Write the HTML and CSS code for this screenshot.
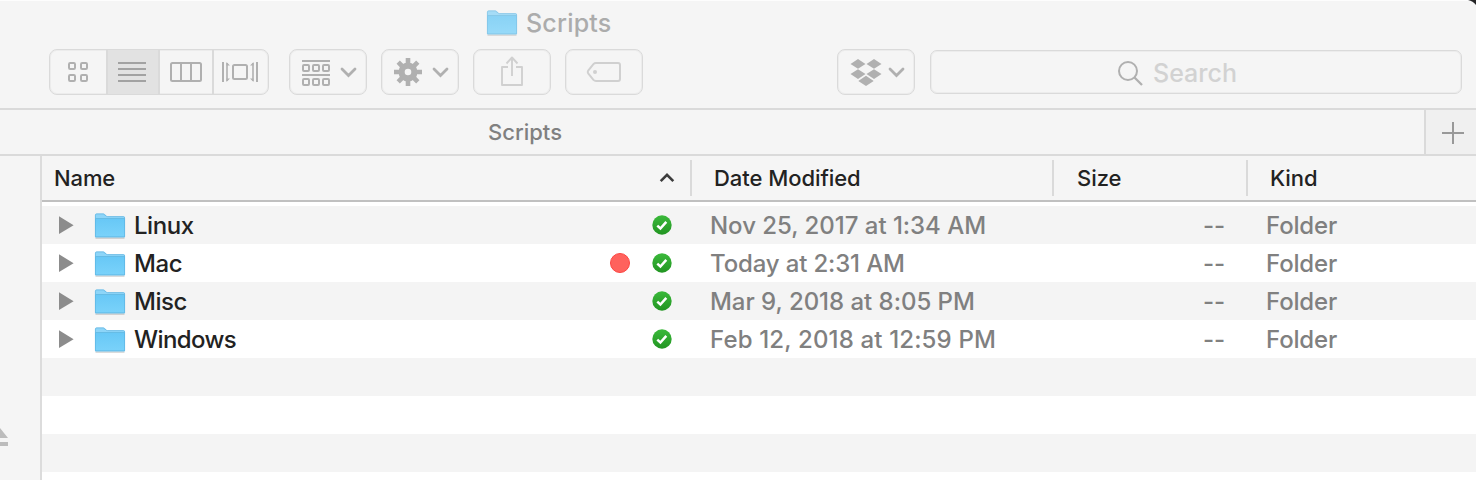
FILE: index.html
```html
<!DOCTYPE html>
<html lang="en">
<head>
<meta charset="utf-8">
<title>Scripts</title>
<link rel="stylesheet" href="styles.css">
</head>
<body>
<svg class="defs" width="0" height="0" aria-hidden="true">
  <defs>
    <linearGradient id="folder-fill" x1="0" y1="0" x2="0" y2="1"><stop offset="0" stop-color="#68c8f6"/><stop offset="1" stop-color="#7ad2fa"/></linearGradient>
    <linearGradient id="ok-fill" x1="0" y1="0" x2="0" y2="1"><stop offset="0" stop-color="#3bb93b"/><stop offset="1" stop-color="#229522"/></linearGradient>
    <symbol id="folder" viewBox="0 0 32 28">
      <path d="M1.5 26h29" stroke="#000" stroke-opacity=".18" stroke-width="1.6"/>
      <path d="M1 24.5V3.2Q1 1.5 2.7 1.5H9.3Q10.3 1.5 11 2.3L12.3 3.7Q12.8 4.2 13.6 4.2H29.4Q31 4.2 31 5.8V24.5Q31 25.2 30.3 25.2H1.7Q1 25.2 1 24.5Z" fill="#8dd5f8"/>
      <path d="M1 7H31V24.5Q31 25.2 30.3 25.2H1.7Q1 25.2 1 24.5Z" fill="url(#folder-fill)"/>
      <path d="M1.5 6.5H30.5" stroke="#5cb5e0" stroke-width=".8"/>
      <path d="M1.4 24.8V3.2Q1.4 1.9 2.7 1.9H9.3L12.3 4.1Q12.8 4.6 13.6 4.6H29.4Q30.6 4.6 30.6 5.8V24.8Z" fill="none" stroke="#58addb" stroke-opacity=".65" stroke-width=".9"/>
    </symbol>
    <symbol id="ok" viewBox="0 0 20 20">
      <circle cx="10" cy="10" r="9.7" fill="url(#ok-fill)"/>
      <path d="M5.3 10.6 8.4 13.5 14.3 6.8" fill="none" stroke="#fff" stroke-width="2.5"/>
    </symbol>
    <symbol id="arrow" viewBox="0 0 16 20"><path d="M1 1.3 15.6 10.2 1 19Z" fill="#8c8c8c"/></symbol>
  </defs>
</svg>
<div class="window">
  <header class="chrome">
    <div class="title"><svg class="folder faded"><use href="#folder"/></svg><span class="title-text">Scripts</span></div>
    <div class="toolbar">
      <div class="views">
        <span class="view"><svg viewBox="50 50 56 44" width="56" height="44" class="line"><g stroke-width="2"><rect x="69" y="63" width="6" height="6" rx="1.2"/><rect x="81" y="63" width="6" height="6" rx="1.2"/><rect x="69" y="75" width="6" height="6" rx="1.2"/><rect x="81" y="75" width="6" height="6" rx="1.2"/></g></svg></span>
        <span class="view selected"><svg viewBox="108 50 50 44" width="50" height="44"><path d="M118 63H146M118 69H146M118 75H146M118 81H146" stroke="#a2a2a2" stroke-width="2"/></svg></span>
        <span class="view"><svg viewBox="160 50 52 44" width="52" height="44" class="line"><rect x="171" y="63" width="30" height="18" rx="1.5" stroke-width="2"/><path d="M181 63V81M191 63V81" stroke-width="2"/></svg></span>
        <span class="view"><svg viewBox="214 50 54 44" width="54" height="44" class="line"><rect x="233" y="65" width="14" height="14" rx="1.5" stroke-width="2"/><path d="M223 62V82M257 62V82" stroke-width="2"/><path d="M227 63V81M253 63V81" stroke-width="1.6"/><path d="M226.5 62V65.5H230ZM226.5 82V78.5H230ZM253.5 62V65.5H250ZM253.5 82V78.5H250Z" fill="#b0b0b0" stroke="none"/></svg></span>
      </div>
      <span class="button"><svg viewBox="290 50 76 44" width="76" height="44" class="line"><path d="M302 61H330M302 75H330" stroke-width="2"/><g stroke-width="2"><rect x="303" y="65" width="6" height="6" rx="1"/><rect x="313" y="65" width="6" height="6" rx="1"/><rect x="323" y="65" width="6" height="6" rx="1"/><rect x="303" y="79" width="6" height="6" rx="1"/><rect x="313" y="79" width="6" height="6" rx="1"/><rect x="323" y="79" width="6" height="6" rx="1"/></g><path d="M342 69 348.5 75.5 355 69" stroke-width="2.8" stroke-linecap="round"/></svg></span>
      <span class="button"><svg viewBox="382 50 76 44" width="76" height="44" class="line"><circle cx="408" cy="72" r="6.4" stroke-width="6.2"/><g stroke-width="4.6"><path d="M408 58V64M408 80V86M394 72H400M416 72H422M398.2 62.2 402.5 66.5M413.5 77.5 417.8 81.8M417.8 62.2 413.5 66.5M402.5 77.5 398.2 81.8"/></g><path d="M434 69 440.5 75.5 447 69" stroke-width="2.8" stroke-linecap="round"/></svg></span>
      <span class="button"><svg viewBox="474 50 76 44" width="76" height="44" class="line pale"><path d="M508 67H502V85H522V67H516M512 76V58M506.5 63.5 512 57.5 517.5 63.5" stroke-width="1.9" stroke-linejoin="round"/></svg></span>
      <span class="button"><svg viewBox="566 50 76 44" width="76" height="44" class="line pale"><path d="M596 63H618Q620 63 620 65V79Q620 81 618 81H596Q594.5 81 593.4 79.9L588.2 73.5Q587.2 72 588.2 70.5L593.4 64.1Q594.5 63 596 63Z" stroke-width="2"/><circle cx="595" cy="72" r="2" fill="#d0d0d0" stroke="none"/></svg></span>
      <span class="button dropbox"><svg viewBox="838 50 76 44" width="76" height="44"><path d="M858 59 865.5 64 858 68.8 850.5 64ZM874 59 881.5 64 874 68.8 866.5 64ZM858 69.2 865.5 74 858 79 850.5 74ZM874 69.2 881.5 74 874 79 866.5 74ZM866 75.8 873.7 80.9 866 86 858.3 80.9Z" fill="#b0b0b0"/><path d="M890 69 896.5 75.5 903 69" fill="none" stroke="#b0b0b0" stroke-width="2.8" stroke-linecap="round"/></svg></span>
      <div class="search"><svg width="28" height="28" viewBox="1116 58 28 28" class="line"><circle cx="1128" cy="71" r="9" stroke-width="2"/><path d="M1134.5 77.5 1142 85" stroke-width="2.3"/></svg><span class="search-text">Search</span></div>
    </div>
  </header>
  <div class="tabs">
    <div class="tab"><span class="tab-text">Scripts</span></div>
    <div class="add"><svg width="24" height="24" viewBox="0 0 24 24"><path d="M1 12H23M12 1V23" stroke="#999" stroke-width="2"/></svg></div>
  </div>
  <div class="body">
    <aside class="sidebar"><svg class="eject" width="8" height="18" viewBox="0 0 8 18"><path d="M0 0 8 10H0ZM0 14H8V18H0Z" fill="#bcbcbc"/></svg></aside>
    <main class="list">
      <div class="columns">
        <div class="col col-name"><span class="name-text">Name</span><svg width="16" height="12" viewBox="0 0 16 12"><path d="M1.7 9.2 8 2.8 14.3 9.2" fill="none" stroke="#3c3c3c" stroke-width="2.6"/></svg></div>
        <div class="col col-date">Date Modified</div>
        <div class="col col-size">Size</div>
        <div class="col col-kind">Kind</div>
      </div>
      <div class="rows">
        <div class="row"><svg class="arrow"><use href="#arrow"/></svg><svg class="folder"><use href="#folder"/></svg><span class="file">Linux</span><svg class="ok"><use href="#ok"/></svg><span class="date">Nov 25, 2017 at 1:34 AM</span><span class="size">--</span><span class="kind">Folder</span></div>
        <div class="row"><svg class="arrow"><use href="#arrow"/></svg><svg class="folder"><use href="#folder"/></svg><span class="file">Mac</span><i class="tag"></i><svg class="ok"><use href="#ok"/></svg><span class="date today">Today at 2:31 AM</span><span class="size">--</span><span class="kind">Folder</span></div>
        <div class="row"><svg class="arrow"><use href="#arrow"/></svg><svg class="folder"><use href="#folder"/></svg><span class="file">Misc</span><svg class="ok"><use href="#ok"/></svg><span class="date">Mar 9, 2018 at 8:05 PM</span><span class="size">--</span><span class="kind">Folder</span></div>
        <div class="row"><svg class="arrow"><use href="#arrow"/></svg><svg class="folder"><use href="#folder"/></svg><span class="file windows">Windows</span><svg class="ok"><use href="#ok"/></svg><span class="date wide">Feb 12, 2018 at 12:59 PM</span><span class="size">--</span><span class="kind">Folder</span></div>
        <div class="row"></div><div class="row"></div><div class="row"></div><div class="row"></div>
      </div>
    </main>
  </div>
  <svg class="corner" width="8" height="5" viewBox="0 0 8 5"><path d="M0 0H8V5Q5 1 0 0Z" fill="#252527"/></svg>
</div>
</body>
</html>
```
FILE: styles.css
```css
* { box-sizing: border-box; }
body { margin: 0; background: #f5f5f5; font-family: Inter, "Liberation Sans", sans-serif; font-weight: 450; color: #222; }
svg { display: block; flex: none; }
.defs { position: absolute; }
.window { position: relative; width: 1476px; height: 480px; overflow: hidden; white-space: nowrap; }
.chrome { height: 110px; background: #f5f5f5; border-top: 1px solid #fdfdfd; border-bottom: 2px solid #dadada; }
.title { height: 48px; padding-left: 486px; display: flex; align-items: center; }
.title-text { margin-left: 8px; font-size: 25px; line-height: 30px; letter-spacing: .2px; color: #acacac; margin-top: -5px; }
.folder { width: 32px; height: 28px; }
.faded { opacity: .76; margin-top: -5px; }
.toolbar { display: flex; align-items: center; padding-left: 49px; height: 46px; gap: 14px; }
.views { display: flex; width: 220px; height: 46px; border: 1px solid #dadada; border-radius: 8px; overflow: hidden; margin-right: 6px; box-shadow: inset 0 0 0 1px #ececec; }
.view + .view { border-left: 2px solid #dadada; }
.selected { background: #e2e2e2; }
.line { fill: none; stroke: #b0b0b0; }
.pale { stroke: #d0d0d0; }
.button { width: 78px; height: 46px; flex: none; border: 1px solid #dadada; border-radius: 8px; box-shadow: inset 0 0 0 1px #ececec; }
.dropbox { margin-left: 180px; }
.search { width: 532px; height: 44px; margin-left: 1px; border: 1px solid #dadada; border-radius: 7px; box-shadow: inset 0 0 0 1px #ececec; display: flex; align-items: center; padding-left: 185px; }
.search-text { margin: 2px 0 0 9px; font-size: 25px; color: #d2d2d2; }
.tabs { height: 46px; display: flex; border-bottom: 2px solid #dadada; }
.tab { width: 1424px; display: flex; align-items: center; padding-left: 488px; }
.tab-text { font-size: 22px; color: #808080; }
.add { width: 52px; border-left: 2px solid #dadada; background: #f0f0f0; display: flex; align-items: center; padding: 2px 0 0 15px; }
.body { display: flex; height: 324px; }
.sidebar { width: 42px; border-right: 2px solid #dcdcdc; padding-top: 272px; }
.list { flex: 1; background: #fff; }
.columns { height: 46px; display: flex; background: #f5f5f5; border-bottom: 2px solid #c0c0c0; font-size: 22px; letter-spacing: -.06px; }
.col { height: 36px; margin-top: 4px; display: flex; align-items: center; border-right: 2px solid #dadada; }
.col-name { width: 650px; padding: 0 15px 0 12px; justify-content: space-between; }
.name-text { font-weight: 550; letter-spacing: -.1px; }
.col-date { width: 362px; padding-left: 22px; }
.col-size { width: 194px; padding-left: 23px; }
.col-kind { border: 0; padding-left: 22px; }
.rows { padding-top: 4px; }
.row { height: 38px; display: flex; align-items: center; padding-left: 16px; font-size: 24px; }
.row:nth-child(odd) { background: #f4f4f4; }
.arrow { width: 16px; height: 20px; }
.row .folder { margin-left: 20px; margin-top: 1px; }
.file { margin-left: 8px; flex: 1; letter-spacing: -.45px; }
.windows { letter-spacing: -.6px; }
.tag { width: 20px; height: 20px; border-radius: 50%; background: #ff625d; border: 1.5px solid #fc4541; margin-right: 22px; }
.ok { width: 20px; height: 20px; }
.date { width: 496px; padding-left: 38px; color: #808080; letter-spacing: -.03px; }
.today { letter-spacing: -.15px; }
.wide { letter-spacing: .15px; }
.size { width: 98px; padding-left: 35px; color: #808080; }
.kind { width: 210px; color: #808080; letter-spacing: -.15px; }
.corner { position: absolute; right: 0; top: 0; }
```
